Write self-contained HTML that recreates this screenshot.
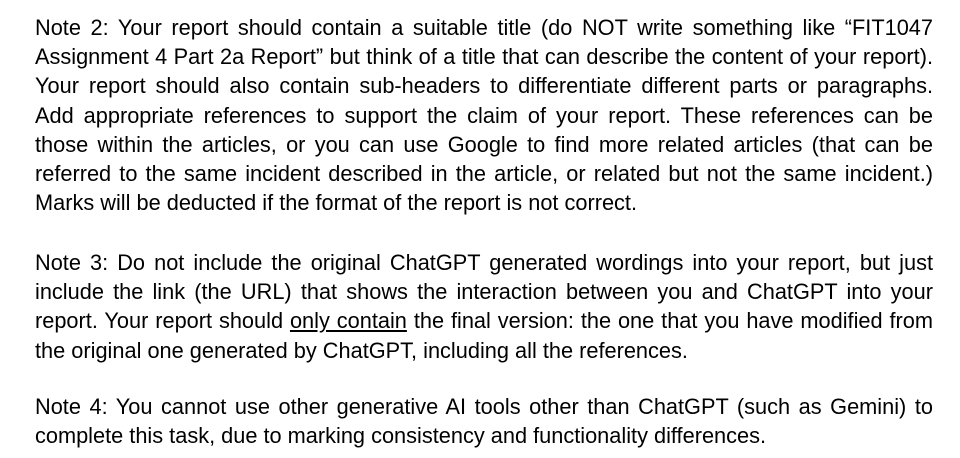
<!DOCTYPE html>
<html><head><meta charset="utf-8"><style>
body{margin:0;width:960px;height:458px;background:#fff;overflow:hidden;font-family:"Liberation Sans",Arial,sans-serif;font-size:21.75px;color:#000;}
.p{position:absolute;left:35px;width:898px;line-height:29.2px;}
.l{text-align:justify;text-align-last:justify;white-space:nowrap;}
.l.e{text-align-last:left;}
u{text-decoration:underline;}
</style></head><body>
<div class="p" style="top:13px">
<div class="l">Note 2: Your report should contain a suitable title (do NOT write something like “FIT1047</div>
<div class="l">Assignment 4 Part 2a Report” but think of a title that can describe the content of your report).</div>
<div class="l">Your report should also contain sub-headers to differentiate different parts or paragraphs.</div>
<div class="l">Add appropriate references to support the claim of your report. These references can be</div>
<div class="l">those within the articles, or you can use Google to find more related articles (that can be</div>
<div class="l">referred to the same incident described in the article, or related but not the same incident.)</div>
<div class="l e">Marks will be deducted if the format of the report is not correct.</div>
</div>
<div class="p" style="top:248px">
<div class="l">Note 3: Do not include the original ChatGPT generated wordings into your report, but just</div>
<div class="l">include the link (the URL) that shows the interaction between you and ChatGPT into your</div>
<div class="l">report. Your report should <u>only contain</u> the final version: the one that you have modified from</div>
<div class="l e">the original one generated by ChatGPT, including all the references.</div>
</div>
<div class="p" style="top:392px">
<div class="l">Note 4: You cannot use other generative AI tools other than ChatGPT (such as Gemini) to</div>
<div class="l e">complete this task, due to marking consistency and functionality differences.</div>
</div>
</body></html>
